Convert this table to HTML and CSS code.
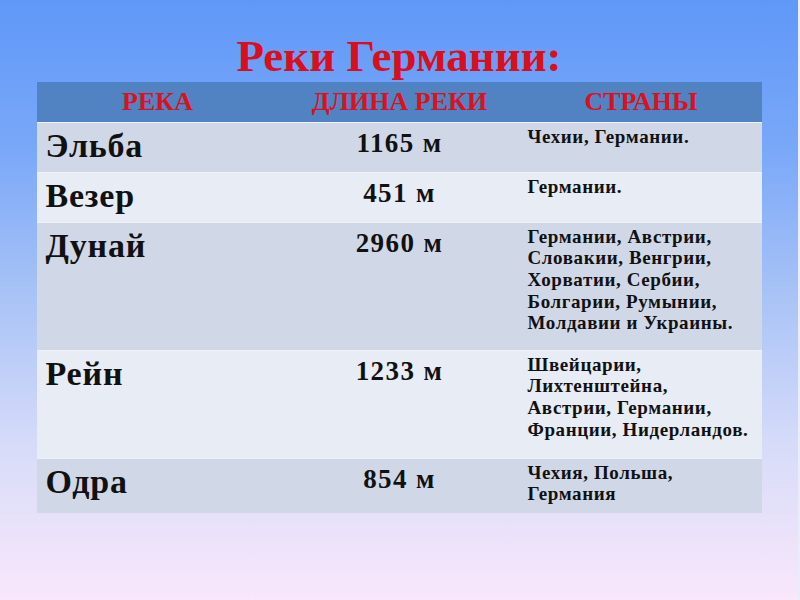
FILE: index.html
```html
<!DOCTYPE html>
<html lang="ru">
<head>
<meta charset="utf-8">
<title>Реки Германии</title>
<link rel="stylesheet" href="styles.css">
</head>
<body>
<div class="slide">
  <h1 class="title">Реки Германии:</h1>
  <table class="rivers">
    <colgroup><col class="c1"><col class="c2"><col class="c3"></colgroup>
    <thead>
      <tr class="head"><th>РЕКА</th><th>ДЛИНА РЕКИ</th><th>СТРАНЫ</th></tr>
    </thead>
    <tbody>
      <tr class="odd r1"><td class="name">Эльба</td><td class="len">1165 м</td><td class="countries">Чехии, Германии.</td></tr>
      <tr class="even r2"><td class="name">Везер</td><td class="len">451 м</td><td class="countries">Германии.</td></tr>
      <tr class="odd r3"><td class="name">Дунай</td><td class="len">2960 м</td><td class="countries">Германии, Австрии,<br>Словакии, Венгрии,<br>Хорватии, Сербии,<br>Болгарии, Румынии,<br>Молдавии и Украины.</td></tr>
      <tr class="even r4"><td class="name">Рейн</td><td class="len">1233 м</td><td class="countries">Швейцарии,<br>Лихтенштейна,<br>Австрии, Германии,<br>Франции, Нидерландов.</td></tr>
      <tr class="odd r5"><td class="name">Одра</td><td class="len">854 м</td><td class="countries">Чехия, Польша,<br>Германия</td></tr>
    </tbody>
  </table>
</div>
</body>
</html>
```

FILE: styles.css
```css
html, body {
  margin: 0;
  padding: 0;
}
body {
  width: 800px;
  height: 600px;
  overflow: hidden;
  font-family: "Liberation Serif", "Times New Roman", serif;
}
.slide {
  width: 800px;
  height: 600px;
  box-sizing: border-box;
  background: linear-gradient(180deg, #5f98f8 0%, #7aa8f8 25%, #aac4f6 50%, #d8dcf9 75%, #f9e7fb 100%);
  display: flex;
  flex-direction: column;
  align-items: center;
  border-right: 2px solid #e8ecfb;
}
.title {
  margin: 0;
  height: 82px;
  box-sizing: border-box;
  padding-top: 31px;
  font-size: 45px;
  line-height: 50px;
  font-weight: bold;
  color: #d8101e;
  text-align: center;
}
.rivers {
  width: 725px;
  border-collapse: collapse;
  table-layout: fixed;
  color: #111;
}
.c1, .c2 { width: 242px; }
.c3 { width: 241px; }
.head {
  background: #5182c2;
  height: 40px;
}
.head th {
  padding: 0;
  font-size: 26px;
  font-weight: bold;
  color: #d9121f;
  vertical-align: middle;
  text-align: center;
}
.odd { background: #d0d8e8; }
.even { background: #e8ecf4; }
tbody tr { border-top: 1px solid #eef1f8; }
.r1 { height: 50px; }
.r2 { height: 50px; }
.r3 { height: 128px; }
.r4 { height: 108px; }
.r5 { height: 55px; }
td {
  vertical-align: top;
  padding: 0;
}
.name {
  font-size: 34px;
  font-weight: bold;
  letter-spacing: 0.8px;
  line-height: 38px;
  padding: 4px 0 0 9px;
}
.len {
  font-size: 27px;
  font-weight: bold;
  letter-spacing: 1.4px;
  line-height: 30px;
  text-align: center;
  padding-top: 5px;
}
.countries {
  font-size: 19px;
  font-weight: bold;
  letter-spacing: 0.6px;
  line-height: 21.7px;
  padding: 3px 0 0 7px;
}
```
